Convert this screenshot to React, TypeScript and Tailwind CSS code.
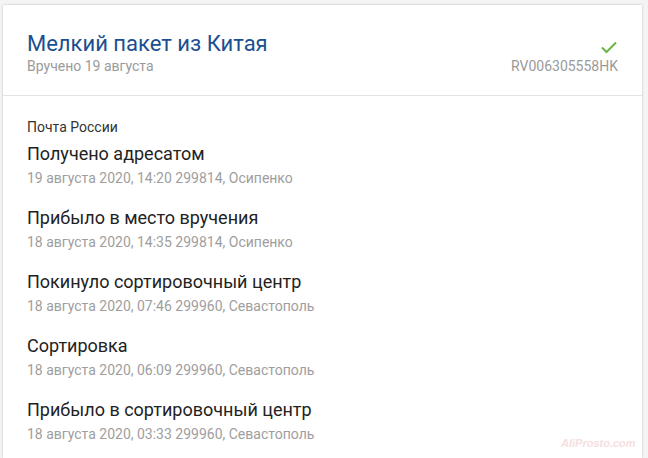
import React from 'react';

const events = [
  { title: 'Получено адресатом', meta: '19 августа 2020, 14:20 299814, Осипенко' },
  { title: 'Прибыло в место вручения', meta: '18 августа 2020, 14:35 299814, Осипенко' },
  { title: 'Покинуло сортировочный центр', meta: '18 августа 2020, 07:46 299960, Севастополь' },
  { title: 'Сортировка', meta: '18 августа 2020, 06:09 299960, Севастополь' },
  { title: 'Прибыло в сортировочный центр', meta: '18 августа 2020, 03:33 299960, Севастополь' },
];

export default function App() {
  return (
    <div className="relative h-[458px] overflow-hidden bg-[#f4f4f4] pt-[5px] pl-[3px] pr-[6px] font-['Roboto',sans-serif]">
      <div className="h-full bg-white shadow-[0_0_2px_rgba(0,0,0,0.25)]">
        <div className="flex justify-between border-b border-[#e3e3e3] px-[24px] pt-[26px] pb-[21px]">
          <div>
            <h1 className="text-[22px] leading-[26px] text-[#1b4f91]">Мелкий пакет из Китая</h1>
            <p className="mt-[1px] text-[14px] leading-[16px] text-[#9a9a9a]">Вручено 19 августа</p>
          </div>
          <div className="flex flex-col items-end">
            <svg width="18" height="24" viewBox="0 0 18 24" className="mt-[3px]">
              <path d="M2 13.5 L6.5 18 L16 8.5" fill="none" stroke="#6ab344" strokeWidth="2" />
            </svg>
            <p className="mt-[0px] text-[14px] leading-[16px] text-[#9a9a9a]">RV006305558HK</p>
          </div>
        </div>

        <div className="px-[24px] pt-[23px]">
          <p className="text-[14px] leading-[16px] text-[#333]">Почта России</p>
          <div className="mt-[7px] flex flex-col gap-[20px]">
            {events.map(e => (
              <div key={e.title}>
                <p className="text-[18px] leading-[24px] text-[#222]">{e.title}</p>
                <p className="mt-[4px] text-[14px] leading-[16px] text-[#9e9e9e]">{e.meta}</p>
              </div>
            ))}
          </div>
        </div>
      </div>
      <span className="absolute left-[561px] top-[436px] text-[11px] leading-[14px] font-bold italic text-[#f6dede] font-['Liberation_Sans',sans-serif]">
        AliProsto.com
      </span>
    </div>
  );
}
